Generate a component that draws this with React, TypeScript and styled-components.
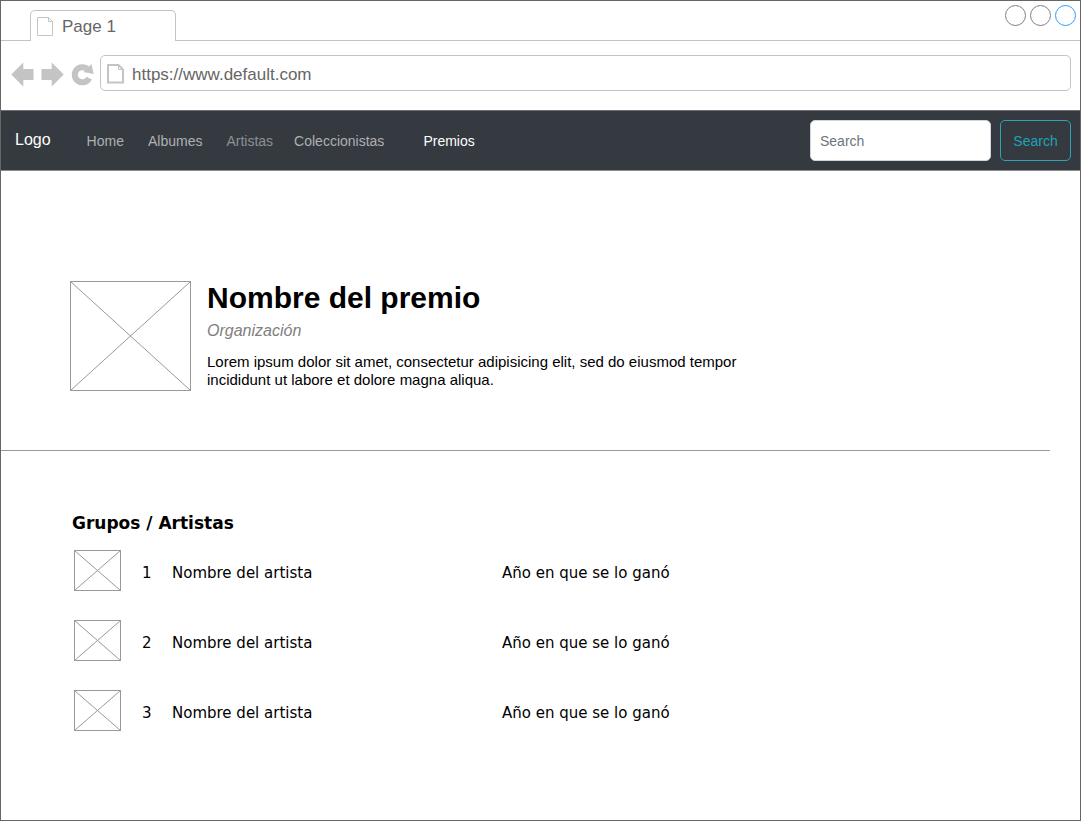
import React from "react";
import styled, { createGlobalStyle } from "styled-components";

const GlobalStyle = createGlobalStyle`
  *, *::before, *::after { box-sizing: border-box; }
  body { margin: 0; background: #ffffff; }
  body, button, input { font-family: "Liberation Sans", Arial, sans-serif; }
  h1, h2, p { margin: 0; }
`;

const Frame = styled.div`
  display: flex;
  flex-direction: column;
  min-height: 100vh;
  border: 1px solid #666666;
  background: #ffffff;
  color: #000000;
`;

const TabStrip = styled.div`
  display: flex;
  justify-content: space-between;
  height: 40px;
  padding: 0 4px 0 29px;
  border-bottom: 1px solid #c4c4c4;
`;

const Tab = styled.button`
  display: flex;
  align-items: center;
  gap: 8px;
  width: 146px;
  height: 31px;
  margin-top: 9px;
  padding: 1px 7px 0 6px;
  border: 1px solid #c4c4c4;
  border-bottom: 0;
  border-radius: 5px 5px 0 0;
  background: #ffffff;
  color: #666666;
  font-size: 17px;
  line-height: 20px;
`;

const WindowControls = styled.div`
  display: flex;
  gap: 4px;
  padding-top: 4px;
`;

const WindowControl = styled.button<{ $color: string }>`
  width: 21px;
  height: 21px;
  padding: 0;
  border: 1px solid ${(p) => p.$color};
  border-radius: 50%;
  background: #ffffff;
`;

const AddressRow = styled.div`
  display: flex;
  align-items: center;
  padding: 14px 9px 19px 10px;
`;

const BrowserButton = styled.button`
  display: flex;
  margin-right: 6px;
  padding: 0;
  border: 0;
  background: none;
`;

const AddressBox = styled.label`
  display: flex;
  flex: 1;
  align-items: center;
  gap: 7px;
  height: 36px;
  padding: 0 5px;
  border: 1px solid #c4c4c4;
  border-radius: 5px;
`;

const AddressInput = styled.input`
  flex: 1;
  min-width: 0;
  padding: 3px 0 0;
  border: 0;
  outline: 0;
  background: none;
  color: #666666;
  font-size: 17px;
  line-height: 20px;
`;

const NavBar = styled.nav`
  display: flex;
  align-items: center;
  justify-content: space-between;
  min-height: 61px;
  padding: 0 9px 0 14px;
  border-top: 1px solid #6b6e72;
  border-bottom: 1px solid #8a8c8f;
  background: #343a40;
`;

const NavLinks = styled.div`
  display: flex;
  align-items: center;
`;

const Brand = styled.a`
  margin-right: 36px;
  padding-bottom: 2px;
  color: #ffffff;
  font-size: 16px;
  line-height: 20px;
  text-decoration: none;
`;

const NavLink = styled.a<{ $tone: "normal" | "dim" | "active" }>`
  margin-right: ${(p) => (p.$tone === "dim" ? 21 : 24)}px;
  margin-left: ${(p) => (p.$tone === "active" ? 15 : 0)}px;
  color: ${(p) => ({ normal: "#aeb0b3", dim: "#8d9093", active: "#ffffff" })[p.$tone]};
  font-size: 14px;
  line-height: 20px;
  text-decoration: none;
`;

const SearchForm = styled.form`
  display: flex;
  gap: 9px;
`;

const SearchInput = styled.input`
  width: 181px;
  height: 41px;
  padding: 0 9px;
  border: 1px solid #ced4da;
  border-radius: 5px;
  background: #ffffff;
  font-size: 14px;
  &::placeholder { color: #6c757d; opacity: 1; }
`;

const SearchButton = styled.button`
  width: 71px;
  height: 41px;
  padding: 0;
  border: 1px solid #2fa3b4;
  border-radius: 5px;
  background: transparent;
  color: #1fa2b5;
  font-size: 14px;
`;

const AwardHeader = styled.header`
  display: flex;
  gap: 16px;
  margin-right: 30px;
  padding: 110px 40px 59px 69px;
  border-bottom: 1px solid #999999;
`;

const AwardText = styled.div`
  max-width: 560px;
`;

const AwardName = styled.h1`
  font-size: 30px;
  line-height: 34px;
`;

const Organization = styled.p`
  margin-top: 6px;
  color: #808080;
  font-size: 16px;
  font-style: italic;
  line-height: 20px;
`;

const Description = styled.p`
  margin-top: 12px;
  font-size: 15px;
  line-height: 18px;
`;

const Winners = styled.section`
  padding: 61px 40px 40px 71px;
  font-family: "DejaVu Sans", Verdana, sans-serif;
`;

const WinnersTitle = styled.h2`
  font-size: 17px;
  line-height: 22px;
`;

const WinnersTable = styled.table`
  width: 100%;
  margin-top: 1px;
  border-collapse: collapse;
  table-layout: fixed;
  font-size: 15px;
  line-height: 20px;
`;

const WinnerCell = styled.td<{ $width?: number }>`
  width: ${(p) => (p.$width ? `${p.$width}px` : "auto")};
  height: 70px;
  padding: 5px 0 0;
  vertical-align: middle;
`;

const PictureCell = styled(WinnerCell)`
  padding: 0 0 0 2px;
`;

const Picture = styled.svg`
  display: block;
  flex: none;
`;

function Placeholder({ width, height }: { width: number; height: number }) {
  return (
    <Picture width={width} height={height} role="img" aria-label="Imagen" fill="none" stroke="#999999">
      <rect x="0.5" y="0.5" width={width - 1} height={height - 1} />
      <path d={`M0.5 0.5 L${width - 0.5} ${height - 0.5} M${width - 0.5} 0.5 L0.5 ${height - 0.5}`} />
    </Picture>
  );
}

function PageIcon({ bold }: { bold?: boolean }) {
  return bold ? (
    <Picture width="19" height="21" viewBox="0 0 19 21" fill="none" stroke="#c4c4c4" strokeWidth="2" aria-hidden="true">
      <path d="M2 2H12.5L17 6.5V19.5H2Z" />
      <path d="M12.5 2V6.5H17" strokeWidth="1" />
    </Picture>
  ) : (
    <Picture width="17" height="19" viewBox="0 0 17 19" fill="none" stroke="#c4c4c4" aria-hidden="true">
      <path d="M0.5 0.5H11.5L15.5 4.5V18.5H0.5ZM11.5 0.5V4.5H15.5" />
    </Picture>
  );
}

const links: { label: string; tone: "normal" | "dim" | "active" }[] = [
  { label: "Home", tone: "normal" },
  { label: "Albumes", tone: "normal" },
  { label: "Artistas", tone: "dim" },
  { label: "Coleccionistas", tone: "normal" },
  { label: "Premios", tone: "active" },
];

const winners = [1, 2, 3];

export default function App() {
  return (
    <Frame>
      <GlobalStyle />
      <TabStrip>
        <Tab type="button">
          <PageIcon />
          Page 1
        </Tab>
        <WindowControls>
          <WindowControl type="button" $color="#808080" aria-label="Minimizar" />
          <WindowControl type="button" $color="#808080" aria-label="Maximizar" />
          <WindowControl type="button" $color="#3399ff" aria-label="Cerrar" />
        </WindowControls>
      </TabStrip>
      <AddressRow>
        <BrowserButton type="button" aria-label="Atrás">
          <Picture width="24" height="28" fill="#c4c4c4">
            <path d="M0.3 15.5L12.3 3.5V10H22.5V21H12.3V27.5Z" />
          </Picture>
        </BrowserButton>
        <BrowserButton type="button" aria-label="Adelante">
          <Picture width="24" height="28" fill="#c4c4c4">
            <path d="M22.7 15.5L10.7 3.5V10H0.5V21H10.7V27.5Z" />
          </Picture>
        </BrowserButton>
        <BrowserButton type="button" aria-label="Recargar">
          <Picture width="23" height="28" viewBox="0 0 23 28" fill="none">
            <path d="M18.2 19.1A7.6 7.6 0 1 1 16.8 10.4" stroke="#c4c4c4" strokeWidth="6" />
            <path d="M20.5 5L22.7 15L12.5 13Z" fill="#c4c4c4" />
          </Picture>
        </BrowserButton>
        <AddressBox>
          <PageIcon bold />
          <AddressInput type="text" aria-label="Dirección" defaultValue="https://www.default.com" />
        </AddressBox>
      </AddressRow>
      <NavBar>
        <NavLinks>
          <Brand href="#">Logo</Brand>
          {links.map((link) => (
            <NavLink key={link.label} href="#" $tone={link.tone}>
              {link.label}
            </NavLink>
          ))}
        </NavLinks>
        <SearchForm>
          <SearchInput type="search" placeholder="Search" aria-label="Search" />
          <SearchButton type="button">Search</SearchButton>
        </SearchForm>
      </NavBar>
      <main>
        <AwardHeader>
          <Placeholder width={121} height={110} />
          <AwardText>
            <AwardName>Nombre del premio</AwardName>
            <Organization>Organización</Organization>
            <Description>
              Lorem ipsum dolor sit amet, consectetur adipisicing elit, sed do eiusmod tempor
              incididunt ut labore et dolore magna aliqua.
            </Description>
          </AwardText>
        </AwardHeader>
        <Winners>
          <WinnersTitle>Grupos / Artistas</WinnersTitle>
          <WinnersTable>
            <tbody>
              {winners.map((position) => (
                <tr key={position}>
                  <PictureCell $width={70}>
                    <Placeholder width={47} height={41} />
                  </PictureCell>
                  <WinnerCell $width={30}>{position}</WinnerCell>
                  <WinnerCell $width={330}>Nombre del artista</WinnerCell>
                  <WinnerCell>Año en que se lo ganó</WinnerCell>
                </tr>
              ))}
            </tbody>
          </WinnersTable>
        </Winners>
      </main>
    </Frame>
  );
}
